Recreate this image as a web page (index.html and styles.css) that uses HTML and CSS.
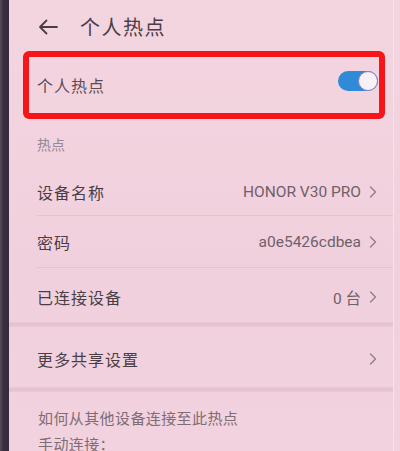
FILE: index.html
```html
<!DOCTYPE html>
<html lang="zh-CN">
<head>
<meta charset="utf-8">
<link rel="stylesheet" href="styles.css">
</head>
<body>
<div class="screen">
  <div class="bezel"></div>
  <div class="content">
    <div class="header">
      <svg class="back" width="20" height="16" viewBox="0 0 20 16"><path d="M19 8H2M8.5 1.5L2 8l6.5 6.5" fill="none" stroke="#4b3d46" stroke-width="1.8" stroke-linecap="round" stroke-linejoin="round"/></svg>
      <span class="title">个人热点</span>
    </div>
    <div class="highlight">
      <span class="main-text">个人热点</span>
      <div class="toggle"><div class="knob"></div></div>
    </div>
    <div class="section-label">热点</div>
    <div class="row row-1 divided">
      <span class="main-text">设备名称</span>
      <span class="value">HONOR V30 PRO</span>
      <svg class="chev" width="8" height="12" viewBox="0 0 8 12"><path d="M1.5 1l5 5-5 5" fill="none" stroke="#8f7f89" stroke-width="1.4" stroke-linecap="round" stroke-linejoin="round"/></svg>
    </div>
    <div class="row row-2 divided">
      <span class="main-text">密码</span>
      <span class="value">a0e5426cdbea</span>
      <svg class="chev" width="8" height="12" viewBox="0 0 8 12"><path d="M1.5 1l5 5-5 5" fill="none" stroke="#8f7f89" stroke-width="1.4" stroke-linecap="round" stroke-linejoin="round"/></svg>
    </div>
    <div class="row row-3">
      <span class="main-text">已连接设备</span>
      <span class="value">0 台</span>
      <svg class="chev" width="8" height="12" viewBox="0 0 8 12"><path d="M1.5 1l5 5-5 5" fill="none" stroke="#8f7f89" stroke-width="1.4" stroke-linecap="round" stroke-linejoin="round"/></svg>
    </div>
    <div class="band"></div>
    <div class="row row-4">
      <span class="main-text">更多共享设置</span>
      <span class="value"></span>
      <svg class="chev" width="8" height="12" viewBox="0 0 8 12"><path d="M1.5 1l5 5-5 5" fill="none" stroke="#8f7f89" stroke-width="1.4" stroke-linecap="round" stroke-linejoin="round"/></svg>
    </div>
    <div class="band"></div>
    <div class="help">
      <p>如何从其他设备连接至此热点</p>
      <p>手动连接：</p>
    </div>
  </div>
  <div class="edge"></div>
</div>
</body>
</html>
```

FILE: styles.css
```css
* { box-sizing: border-box; margin: 0; padding: 0; }
html, body {
  width: 400px;
  height: 451px;
  overflow: hidden;
  font-family: Roboto, "Noto Sans CJK SC", sans-serif;
}
.screen {
  display: flex;
  width: 400px;
  height: 451px;
  overflow: hidden;
  background: linear-gradient(180deg, #f3d5e0 0%, #f0d0dc 60%, #f2d2de 100%);
}
.bezel {
  width: 9px;
  flex: none;
  background: linear-gradient(90deg, #5a4f5c 0, #3a303f 3px, #352b3a 100%);
}
.edge {
  width: 7px;
  flex: none;
  border-left: 1px solid #f7e3ea;
}
.content {
  flex: 1;
  display: flex;
  flex-direction: column;
  min-width: 0;
}
.content > * { flex-shrink: 0; }
.header {
  height: 51px;
  display: flex;
  align-items: center;
  padding: 2px 0 0 29px;
}
.back { flex: none; }
.title {
  margin-left: 22px;
  font-size: 20px;
  color: #4b3d46;
  letter-spacing: 1.5px;
}
.highlight {
  margin-left: 14px;
  width: 362px;
  height: 68px;
  border: 6px solid #f8151a;
  border-radius: 6px;
  display: flex;
  align-items: center;
  justify-content: space-between;
  padding: 0 1px 0 8px;
}
.main-text {
  font-size: 16px;
  color: #4b3d46;
  letter-spacing: 1px;
}
.highlight .main-text { color: #5a4b55; }
.toggle {
  width: 40px;
  height: 20px;
  border-radius: 10px;
  background: #2f8bd7;
  position: relative;
  margin-bottom: 8px;
}
.knob {
  position: absolute;
  right: 0;
  top: 0;
  width: 20px;
  height: 20px;
  border-radius: 50%;
  background: #f7f1f6;
  border: 1.5px solid #7e86c6;
}
.section-label {
  height: 49px;
  padding: 16px 0 0 28px;
  font-size: 14px;
  line-height: 20px;
  color: #978892;
}
.row {
  display: flex;
  align-items: center;
  margin-left: 28px;
  padding-right: 16px;
}
.row .main-text { flex: 1; }
.row-1 { height: 48px; }
.row-2 { height: 52px; }
.row-3 { height: 54px; padding-top: 3px; }
.row-4 { height: 60px; padding-top: 3px; }
.divided { border-bottom: 1px solid #e4c3d0; }
.value {
  font-size: 15.5px;
  color: #6f6069;
  margin-right: 8px;
}
.chev { flex: none; }
.band {
  height: 5px;
  background: linear-gradient(180deg, #ecc9d6, #e5c0ce, #ecc9d6);
}
.help {
  padding: 14px 0 0 29px;
  font-size: 15px;
  line-height: 26px;
  color: #7e6d77;
  letter-spacing: 0.4px;
}
```
